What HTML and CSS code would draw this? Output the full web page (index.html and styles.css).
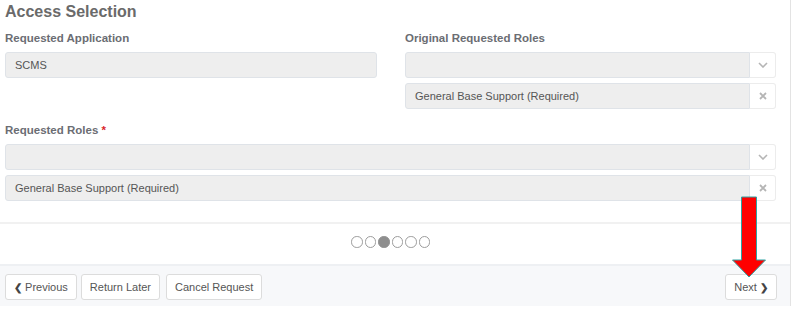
FILE: index.html
```html
<!DOCTYPE html>
<html>
    <head>
        <meta charset="UTF-8">
        <title>Access Selection</title>
        <link rel="stylesheet" href="styles.css">
    </head>

    <body>
        <div class="panel">
            <div class="content">
                <h2 class="title">Access Selection</h2>
                <div class="row">
                    <div class="field">
                        <label>Requested Application</label>
                        <div class="input">SCMS</div>
                    </div>
                    <div class="field">
                        <label>Original Requested Roles</label>
                        <div class="select">
                            <div class="select-box"></div>
                            <div class="select-btn">
                                <svg width="10" height="6" viewBox="0 0 10 6"><path d="M1 1 L5 5 L9 1" fill="none" stroke="#b5b5b5" stroke-width="1.6"/></svg>
                            </div>
                        </div>
                        <div class="select">
                            <div class="select-box">General Base Support (Required)</div>
                            <div class="select-btn">
                                <svg width="8" height="8" viewBox="0 0 8 8"><path d="M1 1 L7 7 M7 1 L1 7" fill="none" stroke="#b5b5b5" stroke-width="1.8"/></svg>
                            </div>
                        </div>
                    </div>
                </div>

                <div class="field wide">
                    <label>Requested Roles <span class="req">*</span></label>
                    <div class="select">
                        <div class="select-box"></div>
                        <div class="select-btn">
                            <svg width="10" height="6" viewBox="0 0 10 6"><path d="M1 1 L5 5 L9 1" fill="none" stroke="#b5b5b5" stroke-width="1.6"/></svg>
                        </div>
                    </div>
                    <div class="select">
                        <div class="select-box">General Base Support (Required)</div>
                        <div class="select-btn">
                            <svg width="8" height="8" viewBox="0 0 8 8"><path d="M1 1 L7 7 M7 1 L1 7" fill="none" stroke="#b5b5b5" stroke-width="1.8"/></svg>
                        </div>
                    </div>
                </div>
            </div>

            <div class="steps">
                <span class="dot"></span>
                <span class="dot"></span>
                <span class="dot active"></span>
                <span class="dot"></span>
                <span class="dot"></span>
                <span class="dot"></span>
            </div>

            <div class="footer">
                <div class="btn-group">
                    <button class="btn"><span class="chev">&#10094;</span> Previous</button>
                    <button class="btn">Return Later</button>
                </div>
                <button class="btn cancel">Cancel Request</button>
                <button class="btn next">Next <span class="chev">&#10095;</span></button>
            </div>

            <!-- red arrow pointing at Next -->
            <svg class="arrow" width="37" height="84" viewBox="0 0 37 84">
                <path d="M9.5 1 H24.5 V64 H33.5 L17 81 L0.5 64 H9.5 Z" fill="#ff0000" stroke="#2fa3a3" stroke-width="1"/>
            </svg>
        </div>
    </body>
</html>
```

FILE: styles.css
```css
* {
    box-sizing: border-box;
}

body {
    margin: 0;
    font-family: "Liberation Sans", Arial, sans-serif;
    color: #555;
    background: #fff;
}

.panel {
    position: relative;
    width: 791px;
    border-right: 1px solid #e3e3e3;
}

.content {
    padding: 0 14px 16px 5px;
    border-bottom: 2px solid #f1f1f1;
}

.title {
    margin: 0;
    font-size: 16px;
    line-height: 24px;
    color: #6a6a6a;
}

.row {
    display: grid;
    grid-template-columns: 372px 371px;
    column-gap: 28px;
}

.field label {
    display: block;
    font-size: 11.5px;
    font-weight: bold;
    color: #6b6d73;
    line-height: 14px;
    margin: 7px 0 7px;
}

.field.wide label {
    margin-top: 9px;
}

.req {
    color: #d9252b;
}

.input {
    height: 26px;
    background: #eeeeee;
    border: 1px solid #dfe3e8;
    border-radius: 3px;
    font-size: 11px;
    line-height: 24px;
    padding: 0 9px;
    color: #555;
}

.select {
    display: flex;
    height: 26px;
    margin-bottom: 5px;
}

.select-box {
    flex: 1;
    background: #eeeeee;
    border: 1px solid #dfe3e8;
    border-radius: 3px 0 0 3px;
    font-size: 11px;
    line-height: 24px;
    padding: 0 9px;
    color: #555;
}

.select-btn {
    width: 26px;
    display: flex;
    align-items: center;
    justify-content: center;
    border: 1px solid #ececec;
    border-left: none;
    border-radius: 0 3px 3px 0;
    background: #fff;
}

.steps {
    display: flex;
    justify-content: center;
    gap: 2px;
    padding: 12px 14px 16px 5px;
    border-bottom: 2px solid #eef0f3;
}

.dot {
    width: 11.5px;
    height: 11.5px;
    border: 1.6px solid #9c9c9c;
    border-radius: 50%;
}

.dot.active {
    background: #8e8e8e;
    border-color: #8e8e8e;
}

.footer {
    display: flex;
    align-items: center;
    gap: 6px;
    background: #f7f8fa;
    padding: 7px 13px 5px 5px;
    height: 40px;
}

.btn-group {
    display: flex;
    gap: 4px;
}

.btn {
    height: 26px;
    background: #fff;
    border: 1px solid #dcdcdc;
    border-radius: 3px;
    font-family: "Liberation Sans", Arial, sans-serif;
    font-size: 11px;
    color: #555;
    padding: 0 8px;
}

.btn .chev {
    font-size: 10px;
    font-weight: bold;
    color: #444;
}

.next {
    margin-left: auto;
}

.arrow {
    position: absolute;
    left: 732px;
    top: 196px;
}
```
